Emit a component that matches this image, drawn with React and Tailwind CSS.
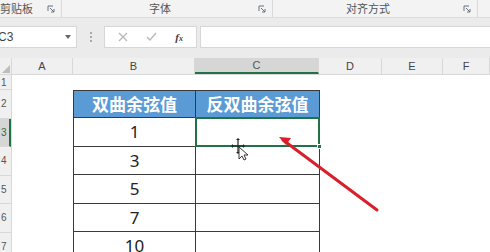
import React from "react";

const cols = [
  { w: 12, label: "" },
  { w: 61, label: "A" },
  { w: 122, label: "B" },
  { w: 124, label: "C", active: true },
  { w: 63, label: "D" },
  { w: 61, label: "E" },
  { w: 47, label: "F" },
];

const values = ["1", "3", "5", "7", "10"];

function Launcher() {
  return (
    <svg width="8" height="8" viewBox="0 0 8 8" className="text-gray-500">
      <path d="M1 1h5M1 1v5" stroke="currentColor" strokeWidth="1" fill="none" />
      <path d="M3 3l4 4M7 4v3H4" stroke="currentColor" strokeWidth="1" fill="none" />
    </svg>
  );
}

function Ribbon() {
  return (
    <div className="flex h-[18px] bg-[#f3f3f3] text-[11px] text-[#555] border-b border-[#dcdcdc]">
      <div className="w-[62px] flex items-center justify-between pr-[6px] border-r border-[#dadada]">
        <span>剪贴板</span>
        <Launcher />
      </div>
      <div className="w-[211px] flex items-center pr-[6px] border-r border-[#dadada]">
        <span className="flex-1 text-center">字体</span>
        <Launcher />
      </div>
      <div className="w-[205px] flex items-center pr-[6px] border-r border-[#dadada]">
        <span className="flex-1 text-center">对齐方式</span>
        <Launcher />
      </div>
    </div>
  );
}

function FormulaBar() {
  return (
    <div className="flex items-center h-[40px] bg-[#ebebeb] pt-[3px] pb-[5px]">
      <div className="w-[77px] h-[22px] bg-white border border-[#d6d6d6] border-l-0 flex items-center justify-between pr-[5px] text-[12px] text-[#444]">
        <span className="-ml-[2px]" style={{ fontFamily: "'Liberation Sans', sans-serif" }}>C3</span>
        <svg width="6" height="4" viewBox="0 0 6 4"><path d="M0 0h6L3 4z" fill="#666" /></svg>
      </div>
      <div className="w-[27px] flex flex-col items-center gap-[2px]">
        <span className="w-[2px] h-[2px] bg-[#aaa]" />
        <span className="w-[2px] h-[2px] bg-[#aaa]" />
        <span className="w-[2px] h-[2px] bg-[#aaa]" />
      </div>
      <div className="w-[93px] h-[22px] bg-white border border-[#d6d6d6] flex items-center justify-around px-[4px] text-[#aaa]">
        <svg width="10" height="10" viewBox="0 0 10 10"><path d="M1 1l8 8M9 1L1 9" stroke="#b8b8b8" strokeWidth="1.3" /></svg>
        <svg width="11" height="10" viewBox="0 0 11 10"><path d="M1 5l3 3 6-7" stroke="#b8b8b8" strokeWidth="1.3" fill="none" /></svg>
        <span className="text-[11px] italic text-[#444] font-bold" style={{ fontFamily: "'Liberation Serif', serif" }}>f<span className="text-[8px]">x</span></span>
      </div>
      <div className="ml-[3px] flex-1 h-[22px] bg-white border border-[#d6d6d6] border-r-0" />
    </div>
  );
}

function Sheet() {
  return (
    <div className="flex flex-col" style={{ fontFamily: "'Liberation Sans', sans-serif" }}>
      <div className="flex h-[17px] bg-[#f0f0f0] border-b border-[#d8d8d8] text-[11px] text-[#444]">
        {cols.map((c, i) => (
          <div
            key={i}
            className={
              c.active
                ? "flex items-center justify-center border-r border-[#d8d8d8] bg-[#d6d6d6] border-b-2 border-b-[#217346] text-[#555]"
                : "flex items-center justify-center border-r border-[#d8d8d8]"
            }
            style={{ width: c.w }}
          >
            {i === 0 ? (
              <svg width="8" height="8" viewBox="0 0 8 8" className="ml-auto mr-[1px] mt-auto mb-[1px]"><path d="M8 0v8H0z" fill="#bdbdbd" /></svg>
            ) : (
              c.label
            )}
          </div>
        ))}
      </div>
      <div className="flex">
        <div className="w-[12px] flex flex-col bg-[#f0f0f0] border-r border-[#d8d8d8] text-[10px] text-[#555] overflow-hidden">
          <div className="h-[15px] border-b border-[#d8d8d8] flex items-center justify-start pl-[1px]">1</div>
          {[2, 3, 4, 5, 6, 7].map((n) => (
            <div
              key={n}
              className={
                n === 3
                  ? "h-[28.5px] border-b border-[#d8d8d8] flex items-center justify-start pl-[1px] bg-[#d6d6d6] border-r-2 border-r-[#217346] text-[#217346]"
                  : "h-[28.5px] border-b border-[#d8d8d8] flex items-center justify-start pl-[1px]"
              }
            >
              {n}
            </div>
          ))}
        </div>
        <div className="flex-1 bg-white">
          <div className="h-[15px]" />
          <div className="ml-[61px] w-[247px] flex flex-col">
            <div className="flex h-[28px] bg-[#5b9bd5] border border-[#3a3a3a] text-white text-[17px] font-bold" style={{ fontFamily: "'Noto Sans CJK SC', sans-serif" }}>
              <div className="w-[122px] flex items-center justify-center border-r border-[#3a3a3a]">双曲余弦值</div>
              <div className="flex-1 flex items-center justify-center">反双曲余弦值</div>
            </div>
            {values.map((v, i) => (
              <div key={v} className="flex h-[28.5px] border border-t-0 border-[#3a3a3a] text-[17px] text-[#222]" style={{ fontFamily: "'Noto Sans', sans-serif" }}>
                <div className="w-[122px] flex items-center justify-center border-r border-[#3a3a3a]">{v}</div>
                <div className="flex-1 relative">
                  {i === 0 && (
                    <div className="absolute -left-[1px] -top-[1px] -right-[1px] -bottom-[1px] border-2 border-[#217346]">
                      <span className="absolute -right-[4px] -bottom-[4px] w-[5px] h-[5px] bg-[#217346] border border-white" />
                    </div>
                  )}
                </div>
              </div>
            ))}
          </div>
        </div>
      </div>
    </div>
  );
}

export default function App() {
  return (
    <div className="relative w-[490px] h-[252px] overflow-hidden bg-white" style={{ fontFamily: "'Noto Sans CJK SC', sans-serif" }}>
      <Ribbon />
      <FormulaBar />
      <Sheet />
      <svg className="absolute left-0 top-0 pointer-events-none" width="490" height="252" viewBox="0 0 490 252">
        <path d="M283 140L377 210" stroke="#d9202a" strokeWidth="3" strokeLinecap="round" />
        <path d="M279 137l12 1-5 7z" fill="#d9202a" />
        <g transform="translate(232 139)">
          <path d="M6 0v14M0 7h12" stroke="#222" strokeWidth="1.2" />
          <path d="M6 -1l-2 2h4zM6 15l-2-2h4zM-1 7l2-2v4zM13 7l-2-2v4z" fill="#222" />
          <path d="M7 8l0 12 3-3 2 4 2-1-2-4 4 0z" fill="#fff" stroke="#222" strokeWidth="0.9" />
        </g>
      </svg>
    </div>
  );
}
